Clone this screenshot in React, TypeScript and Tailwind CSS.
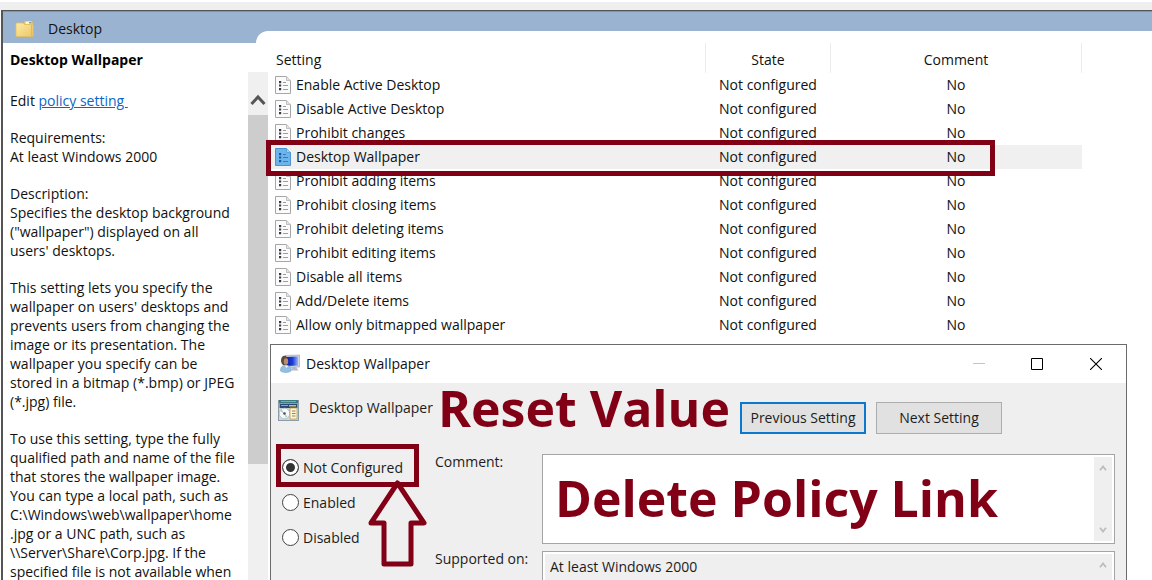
import type { ReactNode } from "react";

const settings = [
  "Enable Active Desktop",
  "Disable Active Desktop",
  "Prohibit changes",
  "Desktop Wallpaper",
  "Prohibit adding items",
  "Prohibit closing items",
  "Prohibit deleting items",
  "Prohibit editing items",
  "Disable all items",
  "Add/Delete items",
  "Allow only bitmapped wallpaper",
];

const requirements = ["Requirements:", "At least Windows 2000"];

const description = [
  "Description:",
  "Specifies the desktop background",
  '("wallpaper") displayed on all',
  "users' desktops.",
];

const purpose = [
  "This setting lets you specify the",
  "wallpaper on users' desktops and",
  "prevents users from changing the",
  "image or its presentation. The",
  "wallpaper you specify can be",
  "stored in a bitmap (*.bmp) or JPEG",
  "(*.jpg) file.",
];

const usage = [
  "To use this setting, type the fully",
  "qualified path and name of the file",
  "that stores the wallpaper image.",
  "You can type a local path, such as",
  "C:\\Windows\\web\\wallpaper\\home",
  ".jpg or a UNC path, such as",
  "\\\\Server\\Share\\Corp.jpg. If the",
  "specified file is not available when",
];

function Paragraph({ lines }: { lines: string[] }) {
  return <p className="mt-[18px] whitespace-pre">{lines.join("\n")}</p>;
}

function FolderIcon() {
  return (
    <svg width="20" height="18" viewBox="0 0 20 18" aria-hidden="true">
      <defs>
        <linearGradient id="folder" x1="0" y1="0" x2="1" y2="1">
          <stop offset="0" stopColor="#fdeba6" />
          <stop offset="1" stopColor="#ecc666" />
        </linearGradient>
      </defs>
      <path d="M8 4 9.500 1H17l1.500 2V15H8z" fill="#e3bd62" />
      <path d="M10.500 1.500h6v2.500h-6z" fill="#fff6d0" />
      <path d="M14 2h2.500v1.500H14z" fill="#7fa5a0" />
      <path d="M1 3h7l1.500 1.500H17l1 .5v11.500H1z" fill="url(#folder)" stroke="#e3bd62" strokeWidth=".8" />
      <path d="M16.500 5v11" stroke="#e0ba60" />
    </svg>
  );
}

function SettingIcon({ selected }: { selected: boolean }) {
  const paper = selected ? "#6cb4ec" : "#fbfbfb";
  const edge = selected ? "#4a93d0" : "#a6a6a6";
  const dot = selected ? "#1c5a9c" : "#38384a";
  const line = selected ? "#3579b8" : "#9c9ca4";
  return (
    <svg width="16" height="18" viewBox="0 0 16 18" className="shrink-0" aria-hidden="true">
      <path d="M.5.500h11l4 4v13H.5z" fill={paper} stroke={edge} />
      <path d="M11.500.500v4h4" fill={selected ? "#a5d3f5" : "#e4e4e4"} stroke={selected ? "#5ba2dc" : "#c0c0c0"} />
      <path d="M4 5h2.200v2.200H4zM4 8.500h2.200v2H4zM4 12h2.200v2.200H4z" fill={dot} />
      <path d="M8 6.500h3M8 9.500h5M8 13.500h5" stroke={line} />
    </svg>
  );
}

function UserMonitorIcon() {
  return (
    <svg width="21" height="20" viewBox="0 0 21 20" className="shrink-0" aria-hidden="true">
      <defs>
        <linearGradient id="screen" x1="0" y1="0" x2="1" y2="0">
          <stop offset="0" stopColor="#0a1d9c" />
          <stop offset=".55" stopColor="#1c3cd8" />
          <stop offset="1" stopColor="#8fb4f8" />
        </linearGradient>
      </defs>
      <path d="M5 1.500 19.500 1v12L5 13.500z" fill="#cdd2dc" stroke="#a3a9b6" strokeWidth=".7" />
      <path d="M6 3 18 2.500v9L6 12z" fill="url(#screen)" />
      <path d="M12 13h4l2.500 3.500H12z" fill="#b4bac5" />
      <ellipse cx="4.500" cy="6.500" rx="3.500" ry="4.800" fill="#5c4a3a" />
      <ellipse cx="6" cy="7.500" rx="2.200" ry="3.200" fill="#b98d6c" />
      <path d="M.5 17c0-4 1.500-5.500 5-5.500s6 1.500 6 5c-2 2.500-9 2.500-11 .5z" fill="#92bfe2" stroke="#6fa3cc" strokeWidth=".6" />
      <path d="m4.500 11.500 2 2.500 2-2.500z" fill="#eef5fb" />
    </svg>
  );
}

function PolicyIcon() {
  return (
    <svg width="21" height="21" viewBox="0 0 21 21" className="shrink-0" aria-hidden="true">
      <path d="M0 0h21v21H0z" fill="#8a9ca6" />
      <path d="M1 0h19v3H1z" fill="#3c7c80" />
      <path d="M3 1h15v1H3z" fill="#75b0ae" />
      <path d="M2 4h17v4H2z" fill="#2c4a78" />
      <path d="M3 5h7v1H3z" fill="#8ea6c4" />
      <path d="M1 8h19v12H1z" fill="#cfd5d8" />
      <circle cx="6.500" cy="13.500" r="5.300" fill="#f7f8fa" stroke="#a8b2b6" strokeWidth=".7" />
      <path d="m6.500 13.500-4-2 1-2zM6.500 13.500l3 3-2 1z" fill="#a4d3bb" />
      <circle cx="6.500" cy="13.500" r="1.300" fill="#4c4c60" />
      <path d="M12 8h7v11h-7z" fill="#fff6d2" stroke="#b39c68" strokeWidth=".8" />
      <path d="M14 11h3.500M14 13.500h3.500M14 16h3.500" stroke="#94825e" />
      <path d="M11 5h7v1.500h-7z" fill="#e8bb37" />
    </svg>
  );
}

function Chevron({ down = false }: { down?: boolean }) {
  return (
    <svg width="8" height="6" viewBox="0 0 8 6" fill="none" aria-hidden="true">
      <path d={down ? "M1 .8 4 4.500 7 .8" : "M1 5.200 4 1.500 7 5.200"} stroke="#bcbcbc" strokeWidth="1.800" />
    </svg>
  );
}

function Choice({ label, checked = false }: { label: string; checked?: boolean }) {
  return (
    <label className="flex h-[35px] items-center gap-1">
      <input
        type="radio"
        name="state"
        defaultChecked={checked}
        className="size-[17px] appearance-none rounded-full border border-[#444] bg-white checked:bg-[#333] checked:shadow-[inset_0_0_0_3px_#fff]"
      />
      {label}
    </label>
  );
}

function ScrollField({ children, scrollbar }: { children: ReactNode; scrollbar: ReactNode }) {
  return (
    <div className="flex border border-[#a5a5a5] bg-white p-[2px]">
      {children}
      <div className="flex w-[18px] flex-col items-center justify-between bg-[#efefef] py-2">{scrollbar}</div>
    </div>
  );
}

function PolicyDialog() {
  return (
    <section
      aria-label="Desktop Wallpaper policy"
      className="absolute top-[344px] right-[25px] left-[270px] h-[320px] border border-[#6b6b6b] bg-[#efefef]"
    >
      <header className="flex h-[38px] items-center bg-white pl-[9px]">
        <UserMonitorIcon />
        <h2 className="ml-[5px] flex-1">Desktop Wallpaper</h2>
        <button type="button" aria-label="Minimize" className="flex w-[59px] justify-center">
          <svg width="12" height="12" viewBox="0 0 12 12"><path d="M0 5.500h12" stroke="#c4c4c4" /></svg>
        </button>
        <button type="button" aria-label="Maximize" className="flex w-[58px] justify-center">
          <svg width="12" height="12" viewBox="0 0 12 12"><path d="M.5.500h11v11H.5z" fill="none" stroke="#000" /></svg>
        </button>
        <button type="button" aria-label="Close" className="flex w-[60px] justify-center">
          <svg width="12" height="12" viewBox="0 0 12 12"><path d="m0 0 12 12M12 0 0 12" stroke="#000" strokeWidth="1.100" /></svg>
        </button>
      </header>

      <div className="flex h-[71px] items-start pt-[17px] text-[#1c1c1c]">
        <div className="flex w-[469px] shrink-0 items-start gap-[10px] pl-[7px]">
          <PolicyIcon />
          <span className="leading-4">Desktop Wallpaper</span>
        </div>
        <div className="flex gap-[10px] pt-[2px]">
          <button type="button" className="h-8 w-[126px] border-2 border-[#0b78d0] bg-[#e1e1e1]">Previous Setting</button>
          <button type="button" className="h-8 w-[126px] border border-[#adadad] bg-[#e1e1e1]">Next Setting</button>
        </div>
      </div>

      <div className="flex pr-[11px] text-[#1c1c1c]">
        <fieldset className="-mt-1 w-[164px] shrink-0 pl-[11px]">
          <Choice label="Not Configured" checked />
          <Choice label="Enabled" />
          <Choice label="Disabled" />
        </fieldset>
        <div className="grid flex-1 grid-cols-[107px_1fr] gap-y-[7px]">
          <label htmlFor="comment" className="leading-4">Comment:</label>
          <ScrollField scrollbar={<><Chevron /><Chevron down /></>}>
            <textarea id="comment" className="h-[84px] flex-1 resize-none overflow-hidden bg-white px-1 outline-none" />
          </ScrollField>
          <label htmlFor="supported" className="leading-4">Supported on:</label>
          <ScrollField scrollbar={<><Chevron /><Chevron down /></>}>
            <textarea
              id="supported"
              readOnly
              defaultValue="At least Windows 2000"
              className="h-[84px] flex-1 resize-none overflow-hidden bg-[#efefef] px-[5px] py-[3px] outline-none"
            />
          </ScrollField>
        </div>
      </div>

      <strong className="absolute top-[31px] left-[167px] text-[50px] leading-[64px] font-bold whitespace-nowrap text-[#820016]">
        Reset Value
      </strong>
      <strong className="absolute top-[121px] left-[284px] text-[50px] leading-[64px] font-bold whitespace-nowrap text-[#820016]">
        Delete Policy Link
      </strong>
      <div className="absolute top-[99px] left-[5px] h-[43px] w-[143px] border-[5px] border-[#820016]" />
      <svg className="absolute top-[134px] left-[97px]" width="60" height="90" viewBox="0 0 60 90" aria-hidden="true">
        <path d="M29.500 4 56 44H43v41H16V44H3z" fill="#efefef" stroke="#820016" strokeWidth="5" strokeLinejoin="round" />
      </svg>
    </section>
  );
}

export default function App() {
  return (
    <main className="relative flex h-screen flex-col overflow-hidden bg-white font-['Open_Sans','Noto_Sans',sans-serif] text-sm text-[#111]">
      <div className="mt-[2px] h-2 shrink-0 bg-[#efefef]" />
      <div className="ml-[1px] flex min-h-0 flex-1 flex-col border-t border-l-2 border-[#555]">
        <header className="flex h-8 shrink-0 border-t border-[#8793a3] bg-[#9ab3d0]">
          <div className="flex w-[253px] items-center gap-[13px] pt-[2px] pl-3">
            <FolderIcon />
            <h1>Desktop</h1>
          </div>
          <div className="mt-[19px] flex-1 rounded-tl-[12px] bg-white" />
        </header>

        <div className="flex flex-1">
          <aside className="flex w-[265px] shrink-0 flex-col">
            <h2 className="h-[29px] shrink-0 pl-[7px] leading-[34px] font-bold text-black">Desktop Wallpaper</h2>
            <div className="flex flex-1">
              <div className="w-[245px] shrink-0 pt-[19px] pl-[7px] leading-[19px]">
                <p>
                  Edit{" "}
                  <a href="#policy" className="whitespace-pre text-[#0a66c8] underline">{"policy setting "}</a>
                </p>
                <Paragraph lines={requirements} />
                <Paragraph lines={description} />
                <Paragraph lines={purpose} />
                <Paragraph lines={usage} />
              </div>
              <div className="flex w-5 flex-col bg-[#f0f0f0]">
                <div className="flex h-[43px] shrink-0 items-center justify-center pt-3">
                  <svg width="16" height="12" viewBox="0 0 16 12" fill="none" aria-hidden="true">
                    <path d="m1.500 10 6.500-7 6.500 7" stroke="#555" strokeWidth="3" />
                  </svg>
                </div>
                <div className="h-[349px] shrink-0 bg-[#cdcdcd]" />
              </div>
            </div>
          </aside>

          <div className="min-w-0 flex-1 pr-[70px]">
            <table className="w-full table-fixed border-collapse">
              <colgroup>
                <col />
                <col className="w-[125px]" />
                <col className="w-[251px]" />
              </colgroup>
              <thead>
                <tr className="h-[30px]">
                  <th className="border-r border-[#ececec] pt-1 pl-2 text-left font-normal">Setting</th>
                  <th className="border-r border-[#ececec] pt-1 font-normal">State</th>
                  <th className="border-r border-[#ececec] pt-1 font-normal">Comment</th>
                </tr>
              </thead>
              <tbody>
                {settings.map((name) => {
                  const selected = name === "Desktop Wallpaper";
                  return (
                    <tr key={name} className={selected ? "h-6 bg-[#f0f0f0]" : "h-6"}>
                      <td className="p-0 pl-[7px]">
                        <div className="flex h-6 items-center gap-[5px]">
                          <SettingIcon selected={selected} />
                          {name}
                        </div>
                      </td>
                      <td className="p-0 text-center">Not configured</td>
                      <td className="p-0 text-center">No</td>
                    </tr>
                  );
                })}
              </tbody>
            </table>
          </div>
        </div>
      </div>

      <div className="absolute top-[140px] left-[266px] h-9 w-[729px] border-[5px] border-[#820016]" />
      <PolicyDialog />
    </main>
  );
}
